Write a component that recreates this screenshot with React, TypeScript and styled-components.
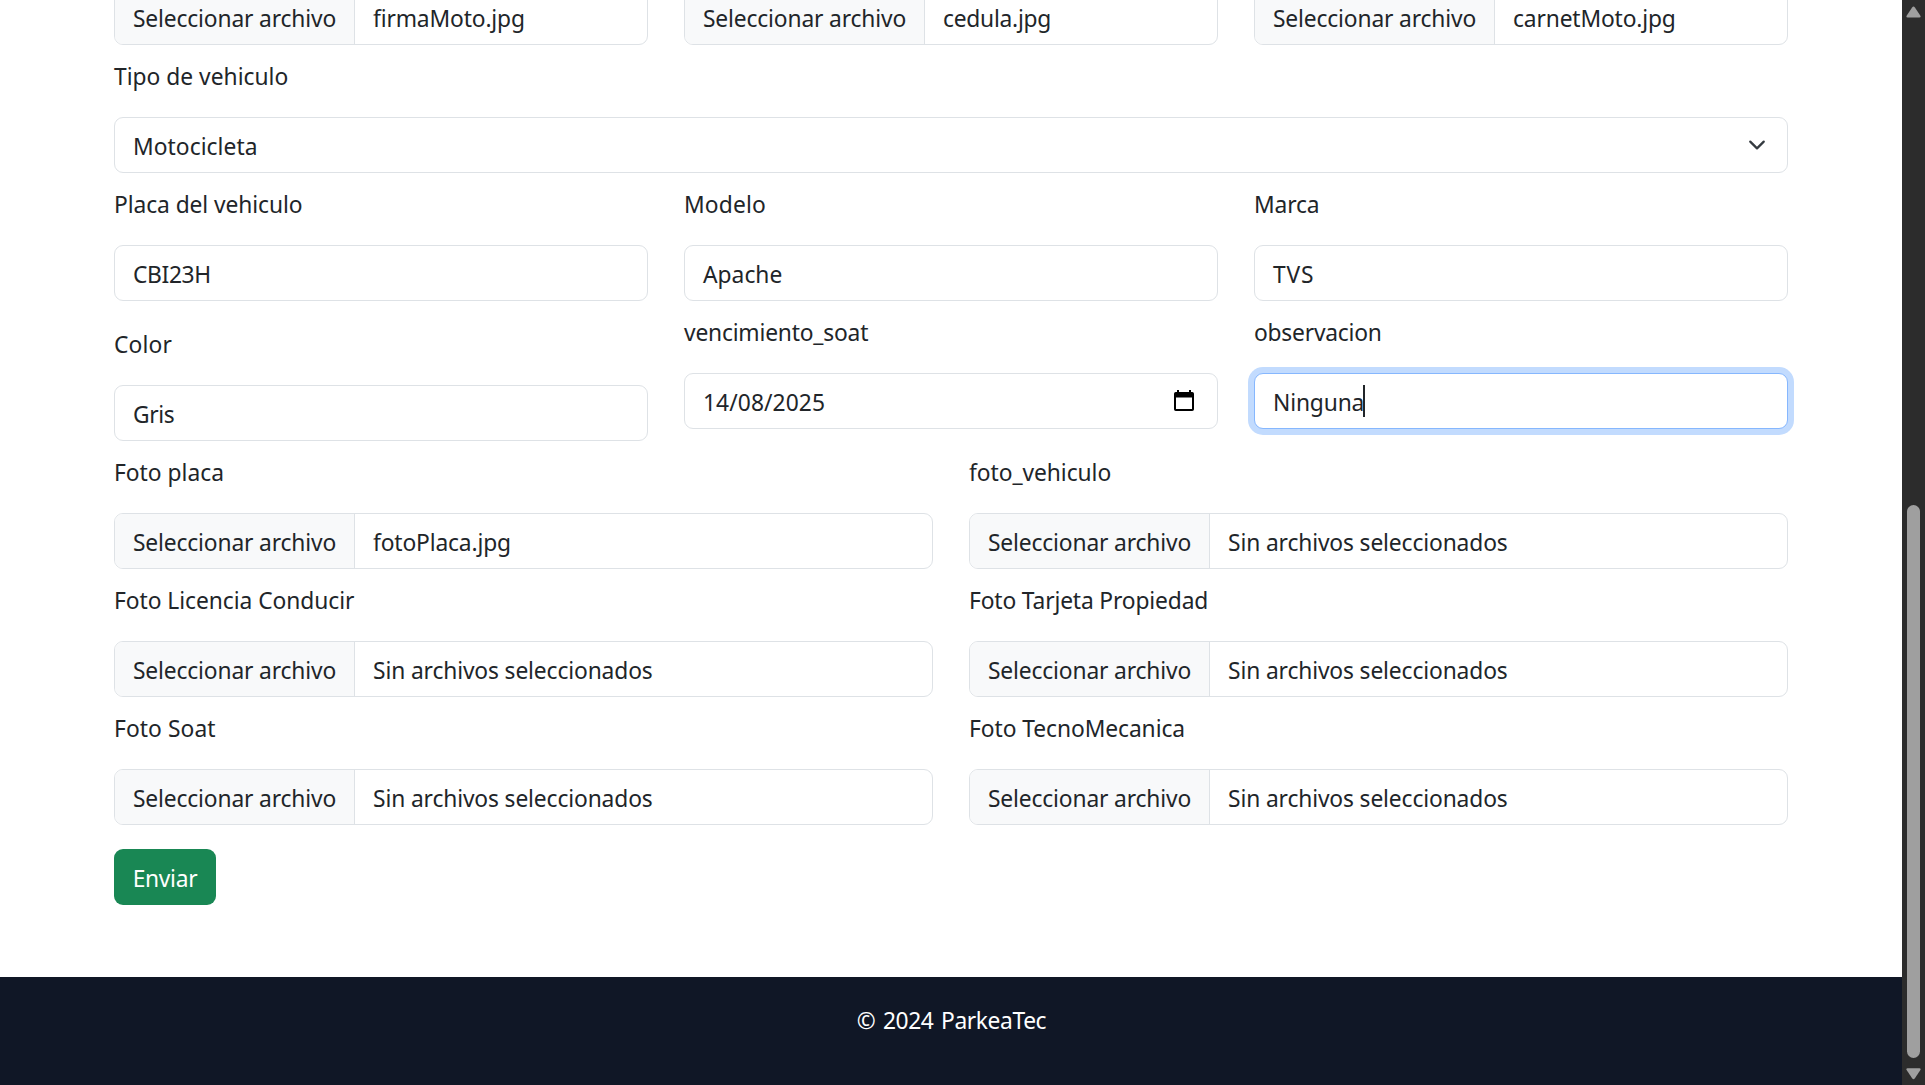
import React from "react";
import styled, { createGlobalStyle, css } from "styled-components";

const GlobalStyle = createGlobalStyle`
  *, *::before, *::after { box-sizing: border-box; }
  html, body { margin: 0; padding: 0; background: #fff; overflow: hidden; }
  body {
    color: #212529;
    font-family: "Noto Sans", "Open Sans", sans-serif;
    font-size: 22.8px;
    line-height: 36px;
    letter-spacing: -0.15px;
  }
`;

const Screen = styled.div`
  display: flex;
  width: 1925px;
  height: 1085px;
  overflow: hidden;
`;

const Page = styled.div`
  display: flex;
  flex-direction: column;
  justify-content: flex-end;
  flex: 1;
  min-width: 0;
`;

const Form = styled.main`
  display: flex;
  flex-direction: column;
  flex-shrink: 0;
  gap: 12px;
  padding: 0 114px 72px;
`;

const Row = styled.div<{ $columns: number }>`
  display: grid;
  grid-template-columns: repeat(${(p) => p.$columns}, 1fr);
  column-gap: 36px;
`;

const Field = styled.div<{ $lowered?: boolean }>`
  display: flex;
  flex-direction: column;
  gap: 24px;
  padding-top: ${(p) => (p.$lowered ? 12 : 0)}px;
`;

const Label = styled.label`
  height: 36px;
`;

const Text = styled.span<{ $track?: number }>`
  display: block;
  padding-top: 4px;
  line-height: 32px;
  white-space: nowrap;
  ${(p) => p.$track !== undefined && css`letter-spacing: ${p.$track}px;`}
`;

const Control = styled.div<{ $focused?: boolean }>`
  display: flex;
  align-items: center;
  height: 56px;
  padding: 0 18px;
  background: #fff;
  border: 1px solid ${(p) => (p.$focused ? "#86b7fe" : "#dee2e6")};
  border-radius: 9px;
  box-shadow: ${(p) => (p.$focused ? "0 0 0 6px #c2dbfe" : "none")};
`;

const Trailing = styled.span<{ $inset?: number }>`
  display: flex;
  margin-left: auto;
  margin-right: ${(p) => p.$inset ?? 0}px;
  padding-bottom: 1px;
`;

const Caret = styled.span`
  width: 2px;
  height: 32px;
  margin-left: -1px;
  background: #212529;
`;

const FileControl = styled(Control)`
  padding: 0;
  gap: 18px;
  overflow: hidden;
`;

const FileButton = styled.span`
  display: flex;
  align-items: center;
  width: 240px;
  height: 100%;
  padding-left: 18px;
  background: #f8f9fa;
  border-right: 1px solid #dee2e6;
`;

const SubmitButton = styled.button`
  align-self: flex-start;
  width: 102px;
  height: 56px;
  margin-top: 12px;
  padding: 0;
  font: inherit;
  letter-spacing: inherit;
  color: #fff;
  background: #198754;
  border: 0;
  border-radius: 9px;
`;

const Footer = styled.footer`
  flex-shrink: 0;
  height: 108px;
  padding: 24px 0 0 1px;
  text-align: center;
  word-spacing: 2px;
  color: #fff;
  background: #101726;
`;

const Scrollbar = styled.aside`
  display: flex;
  flex-direction: column;
  align-items: center;
  width: 23px;
  padding: 6px 0 5px;
  background: #2c2c2c;
`;

const Thumb = styled.div`
  width: 13px;
  height: 553px;
  margin: auto 0 10px;
  background: #9f9f9f;
  border-radius: 7px;
`;

const Chevron = () => (
  <svg width="24" height="18" viewBox="0 0 16 16" fill="none">
    <path d="m2 5 6 6 6-6" stroke="#343a40" strokeWidth="2" strokeLinecap="round" strokeLinejoin="round" />
  </svg>
);

const CalendarIcon = () => (
  <svg width="20" height="21" viewBox="0 0 20 21">
    <path
      fill="#000"
      fillRule="evenodd"
      d="M3 0h2v2h10V0h2v2h1.2Q20 2 20 3.8V19.2Q20 21 18.2 21H1.8Q0 21 0 19.2V3.8Q0 2 1.8 2H3zM2 7.5V19h16V7.5z"
    />
  </svg>
);

const Arrow = ({ down }: { down?: boolean }) => (
  <svg width="15" height="12" viewBox="0 0 15 12">
    <path
      fill="#9f9f9f"
      d={
        down
          ? "M1.6 0.3H13.4Q15.2 0.5 14.4 2.1L8.9 10.3Q7.5 12.2 6.1 10.3L0.6 2.1Q-0.2 0.5 1.6 0.3Z"
          : "M1.6 11.5H13.4Q15.2 11.3 14.4 9.7L8.9 1.5Q7.5 -0.4 6.1 1.5L0.6 9.7Q-0.2 11.3 1.6 11.5Z"
      }
    />
  </svg>
);

interface FieldProps {
  label: string;
  value: string;
  lowered?: boolean;
  focused?: boolean;
  labelTrack?: number;
  track?: number;
  children?: React.ReactNode;
}

const TextField = ({ label, value, lowered, focused, labelTrack, track, children }: FieldProps) => (
  <Field $lowered={lowered}>
    <Label><Text $track={labelTrack}>{label}</Text></Label>
    <Control $focused={focused}>
      <Text $track={track}>{value}</Text>
      {children}
    </Control>
  </Field>
);

const FileField = ({ label, value, labelTrack, track }: FieldProps) => (
  <Field>
    <Label><Text $track={labelTrack}>{label}</Text></Label>
    <FileControl>
      <FileButton><Text>Seleccionar archivo</Text></FileButton>
      <Text $track={track}>{value}</Text>
    </FileControl>
  </Field>
);

const EMPTY = "Sin archivos seleccionados";

export default function App() {
  return (
    <>
      <GlobalStyle />
      <Screen>
        <Page>
          <Form>
            <Row $columns={3}>
              <FileField label="" value="firmaMoto.jpg" />
              <FileField label="" value="cedula.jpg" track={-0.25} />
              <FileField label="" value="carnetMoto.jpg" />
            </Row>
            <Row $columns={1}>
              <TextField label="Tipo de vehiculo" labelTrack={0} value="Motocicleta" track={0.05}>
                <Trailing><Chevron /></Trailing>
              </TextField>
            </Row>
            <Row $columns={3}>
              <TextField label="Placa del vehiculo" labelTrack={-0.08} value="CBI23H" track={-0.35} />
              <TextField label="Modelo" labelTrack={0.15} value="Apache" track={0} />
              <TextField label="Marca" value="TVS" track={0.8} />
            </Row>
            <Row $columns={3}>
              <TextField label="Color" labelTrack={0.15} value="Gris" track={-0.4} lowered />
              <TextField label="vencimiento_soat" labelTrack={-0.2} value="14/08/2025" track={0.08}>
                <Trailing $inset={5}><CalendarIcon /></Trailing>
              </TextField>
              <TextField label="observacion" labelTrack={-0.22} value="Ninguna" focused>
                <Caret />
              </TextField>
            </Row>
            <Row $columns={2}>
              <FileField label="Foto placa" labelTrack={0} value="fotoPlaca.jpg" />
              <FileField label="foto_vehiculo" labelTrack={-0.06} value={EMPTY} track={-0.13} />
            </Row>
            <Row $columns={2}>
              <FileField label="Foto Licencia Conducir" labelTrack={-0.05} value={EMPTY} track={-0.13} />
              <FileField label="Foto Tarjeta Propiedad" value={EMPTY} track={-0.13} />
            </Row>
            <Row $columns={2}>
              <FileField label="Foto Soat" labelTrack={0.08} value={EMPTY} track={-0.13} />
              <FileField label="Foto TecnoMecanica" labelTrack={-0.07} value={EMPTY} track={-0.13} />
            </Row>
            <SubmitButton type="button"><Text $track={-0.3}>Enviar</Text></SubmitButton>
          </Form>
          <Footer><Text $track={-0.4}>© 2024 ParkeaTec</Text></Footer>
        </Page>
        <Scrollbar>
          <Arrow />
          <Thumb />
          <Arrow down />
        </Scrollbar>
      </Screen>
    </>
  );
}
